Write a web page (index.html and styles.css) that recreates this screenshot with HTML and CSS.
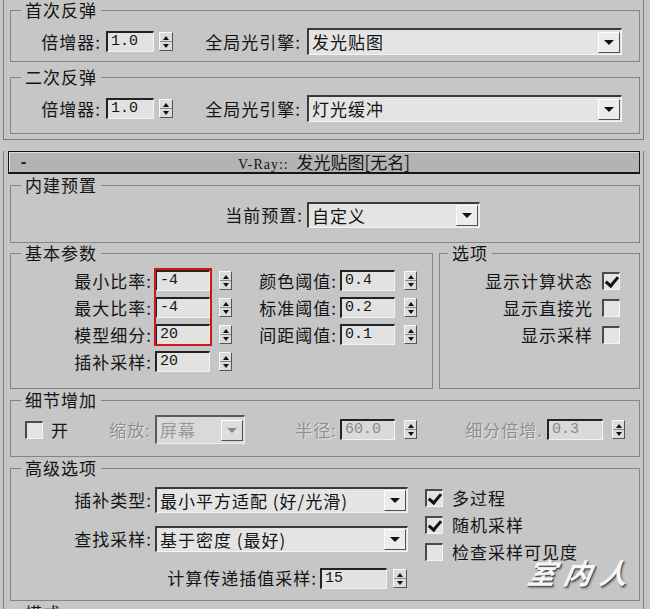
FILE: index.html
```html
<!DOCTYPE html>
<html>
<head lang="zh">
    <meta charset="UTF-8">
    <title>V-Ray 发光贴图</title>
    <link rel="stylesheet" href="styles.css">
</head>
<body>
<div class="roll roll-top">
    <fieldset class="grp g1">
        <legend>首次反弹</legend>
        <div class="row r29">
            <span class="lbl w90">倍增器:</span>
            <span class="num n48">1.0</span>
            <span class="spin"></span>
            <span class="lbl w128">全局光引擎:</span>
            <span class="sel s315"><span class="txt">发光贴图</span><span class="arr"></span></span>
        </div>
    </fieldset>
    <fieldset class="grp g2">
        <legend>二次反弹</legend>
        <div class="row r29">
            <span class="lbl w90">倍增器:</span>
            <span class="num n48">1.0</span>
            <span class="spin"></span>
            <span class="lbl w128">全局光引擎:</span>
            <span class="sel s315"><span class="txt">灯光缓冲</span><span class="arr"></span></span>
        </div>
    </fieldset>
</div>

<div class="roll roll-main">
    <div class="head">
        <span class="minus">-</span>
        <span class="title"><span class="vr">V-Ray::</span> 发光贴图[无名]</span>
        <span></span>
    </div>

    <fieldset class="grp g-preset">
        <legend>内建预置</legend>
        <div class="row r28">
            <span class="lbl w292">当前预置:</span>
            <span class="sel s173"><span class="txt">自定义</span><span class="arr"></span></span>
        </div>
    </fieldset>

    <div class="split">
        <fieldset class="grp g-basic">
            <legend>基本参数</legend>
            <div class="rows">
                <div class="row r27">
                    <span class="lbl w141">最小比率:</span>
                    <span class="num">-4</span>
                    <span class="spin"></span>
                    <span class="lbl w105">颜色阈值:</span>
                    <span class="num">0.4</span>
                    <span class="spin"></span>
                </div>
                <div class="row r27">
                    <span class="lbl w141">最大比率:</span>
                    <span class="num">-4</span>
                    <span class="spin"></span>
                    <span class="lbl w105">标准阈值:</span>
                    <span class="num">0.2</span>
                    <span class="spin"></span>
                </div>
                <div class="row r27">
                    <span class="lbl w141">模型细分:</span>
                    <span class="num">20</span>
                    <span class="spin"></span>
                    <span class="lbl w105">间距阈值:</span>
                    <span class="num">0.1</span>
                    <span class="spin"></span>
                </div>
                <div class="row r27">
                    <span class="lbl w141">插补采样:</span>
                    <span class="num">20</span>
                    <span class="spin"></span>
                </div>
                <div class="mark"></div>
            </div>
        </fieldset>
        <fieldset class="grp g-opt">
            <legend>选项</legend>
            <div class="row r27 end">
                <span>显示计算状态</span>
                <span class="chk on"></span>
            </div>
            <div class="row r27 end">
                <span>显示直接光</span>
                <span class="chk"></span>
            </div>
            <div class="row r27 end">
                <span>显示采样</span>
                <span class="chk"></span>
            </div>
        </fieldset>
    </div>

    <fieldset class="grp g-detail">
        <legend>细节增加</legend>
        <div class="row r29">
            <span class="chk first"></span>
            <span class="on-lbl">开</span>
            <span class="lbl w82 dis">缩放:</span>
            <span class="sel s90 off"><span class="txt">屏幕</span><span class="arr"></span></span>
            <span class="lbl w92 dis">半径:</span>
            <span class="num off">60.0</span>
            <span class="spin"></span>
            <span class="lbl w126 dis">细分倍增.</span>
            <span class="num off n56">0.3</span>
            <span class="spin"></span>
        </div>
    </fieldset>

    <fieldset class="grp g-adv">
        <legend>高级选项</legend>
        <div class="adv">
            <div class="adv-left">
                <div class="row r28">
                    <span class="lbl w141">插补类型:</span>
                    <span class="sel s253"><span class="txt">最小平方适配 (好/光滑)</span><span class="arr"></span></span>
                </div>
                <div class="row r28">
                    <span class="lbl w141">查找采样:</span>
                    <span class="sel s253"><span class="txt">基于密度 (最好)</span><span class="arr"></span></span>
                </div>
                <div class="row r28">
                    <span class="lbl w306">计算传递插值采样:</span>
                    <span class="num n67">15</span>
                    <span class="spin sp14"></span>
                </div>
            </div>
            <div class="adv-right">
                <div class="row r27"><span class="chk on"></span><span class="ck-lbl">多过程</span></div>
                <div class="row r27"><span class="chk on"></span><span class="ck-lbl">随机采样</span></div>
                <div class="row r27"><span class="chk"></span><span class="ck-lbl">检查采样可见度</span></div>
            </div>
        </div>
    </fieldset>

    <fieldset class="grp g-mode">
        <legend>模式</legend>
        <div class="row r29"></div>
    </fieldset>
</div>

<div class="stamp">室内人</div>
</body>
</html>
```

FILE: styles.css
```css
*{
    margin:0;
    padding:0;
    box-sizing:border-box;
}
body{
    width:650px;
    height:609px;
    overflow:hidden;
    position:relative;
    background:#c6c6c6;
    color:#141414;
    font-family:"Noto Sans CJK SC","Liberation Sans",sans-serif;
    font-size:17px;
    line-height:20px;
    letter-spacing:1px;
}

/* rollouts */
.roll{
    margin-left:3px;
    width:641px;
    border-left:1px solid #7c7c7c;
    border-right:1px solid #7c7c7c;
    padding:0 3px 0 6px;
}
.roll-top{
    border-bottom:1px solid #7c7c7c;
    padding-bottom:5px;
}
.roll-main{
    margin-top:23px;
    height:470px;
}
.head{
    display:grid;
    grid-template-columns:1fr auto 1fr;
    align-items:center;
    height:23px;
    margin:-12px 0 0 -2px;
    background:#b3b3b3;
    border:1px solid #161616;
    border-bottom-width:2px;
    box-shadow:inset 1px 1px 0 #dedede;
}
.minus{
    padding-left:10px;
    font-family:"Liberation Mono",monospace;
    font-size:15px;
    font-weight:700;
}
.title{
    white-space:nowrap;
    letter-spacing:0;
}
.vr{
    font-family:"Liberation Serif",serif;
    font-size:14px;
    letter-spacing:1px;
    margin-right:4px;
}

/* group boxes */
.grp{
    border:1px solid #858585;
    min-width:0;
}
.grp legend{
    margin-left:10px;
    padding:0 4px;
}
.g1{padding:7px 0 5px;}
.g2{margin-top:5px;padding:7px 0 10px;}
.g-preset{margin-top:1px;padding:6px 0 13px;}
.split{
    display:flex;
}
.g-basic{
    width:423px;
    padding:4px 0 13px;
}
.g-opt{
    flex:1;
    margin-left:6px;
    padding:4px 19px 13px 0;
}
.g-opt legend{margin-left:8px;}
.g-detail{margin-top:1px;padding:5px 0 12px;}
.g-adv{margin-top:1px;padding:8px 0 8px;}
.g-mode{margin-top:2px;padding:5px 0 8px;}

.rows{position:relative;}
.mark{
    position:absolute;
    left:143px;
    top:1px;
    width:58px;
    height:78px;
    border:2px solid #d21616;
}

.row{
    display:flex;
    align-items:center;
}
.r29{height:29px;}
.r28{height:28px;}
.r27{height:27px;}
.end{justify-content:flex-end;}

.lbl{
    flex:none;
    text-align:right;
    white-space:nowrap;
}
.w82{width:82px;}
.w90{width:90px;}
.w92{width:92px;}
.w105{width:105px;}
.w126{width:126px;}
.w128{width:128px;}
.w141{width:141px;}
.w292{width:292px;}
.w306{width:306px;}
.dis{
    color:#8e8e8e;
    text-shadow:1px 1px 0 #e8e8e8;
}

/* number fields */
.num{
    flex:none;
    width:55px;
    height:21px;
    margin-left:3px;
    padding-left:3px;
    background:#e2e2e2;
    border-style:solid;
    border-width:2px 1px 1px 2px;
    border-color:#232323 #f2f2f2 #f2f2f2 #232323;
    font-family:"Liberation Mono",monospace;
    font-size:15px;
    line-height:18px;
    letter-spacing:0;
}
.n48{width:48px;margin-left:5px;}
.n56{width:56px;margin-left:4px;}
.n67{width:67px;}
.num.off{
    color:#8a8a8a;
    background:#dadada;
}

/* spinners */
.spin{
    flex:none;
    width:13px;
    height:19px;
    margin-left:9px;
    padding:3px 0 2px;
    display:flex;
    flex-direction:column;
    align-items:center;
    justify-content:space-between;
    background:linear-gradient(#dcdcdc 8px,#8a8a8a 8px,#8a8a8a 9px,#dcdcdc 9px);
    border:1px solid;
    border-color:#f8f8f8 #555 #555 #f8f8f8;
}
.spin::before{
    content:"";
    border-left:3px solid transparent;
    border-right:3px solid transparent;
    border-bottom:4px solid #111;
}
.spin::after{
    content:"";
    border-left:3px solid transparent;
    border-right:3px solid transparent;
    border-top:4px solid #111;
}
.g1 .spin,.g2 .spin{width:14px;margin-left:5px;}
.sp14{width:14px;margin-left:6px;}

/* dropdowns */
.sel{
    flex:none;
    display:flex;
    align-items:center;
    height:27px;
    padding-left:3px;
    background:#e4e4e4;
    border-style:solid;
    border-width:2px 1px 1px 2px;
    border-color:#3a3a3a #f4f4f4 #f4f4f4 #3a3a3a;
}
.sel .txt{
    flex:1;
    white-space:nowrap;
}
.arr{
    flex:none;
    width:22px;
    height:21px;
    margin-right:1px;
    display:flex;
    align-items:center;
    justify-content:center;
    background:#ececec;
    border:1px solid;
    border-color:#fff #505050 #505050 #fff;
}
.arr::before{
    content:"";
    border-left:5px solid transparent;
    border-right:5px solid transparent;
    border-top:5px solid #111;
}
.s315{width:315px;margin-left:6px;}
.s173{width:173px;margin-left:4px;height:26px;}
.s253{width:253px;margin-left:3px;height:26px;}
.s90{width:90px;margin-left:4px;height:29px;}
.sel.off{
    color:#9a9a9a;
    background:#d9d9d9;
    border-color:#5a5a5a #eee #eee #5a5a5a;
}
.sel.off .arr{background:#dedede;}
.sel.off .arr::before{border-top-color:#8a8a8a;}

/* checkboxes */
.chk{
    flex:none;
    position:relative;
    width:18px;
    height:18px;
    margin-left:9px;
    background:#e4e4e4;
    border-style:solid;
    border-width:2px 1px 1px 2px;
    border-color:#4a4a4a #f4f4f4 #f4f4f4 #4a4a4a;
}
.chk.on::after{
    content:"";
    position:absolute;
    left:4px;
    top:0;
    width:5px;
    height:10px;
    border-right:3px solid #111;
    border-bottom:3px solid #111;
    transform:rotate(40deg);
}
.chk.first{margin-left:14px;}
.on-lbl{
    flex:none;
    width:18px;
    margin-left:8px;
}

/* advanced options */
.adv{display:flex;}
.adv-left{
    width:414px;
    display:flex;
    flex-direction:column;
    gap:11px;
}
.adv-right{margin-top:-2px;}
.adv-right .chk{margin-left:0;}
.ck-lbl{margin-left:9px;}

/* watermark */
.stamp{
    position:absolute;
    left:528px;
    top:555px;
    font-size:28px;
    line-height:34px;
    letter-spacing:8px;
    font-weight:700;
    font-style:italic;
    color:#f6f6f6;
    text-shadow:1px 1px 0 #4a4a4a,2px 2px 2px #777;
    transform:skewX(-10deg);
}
```
